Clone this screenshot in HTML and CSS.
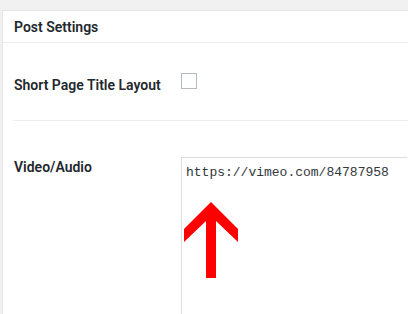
FILE: index.html
```html
<!DOCTYPE html>
<html lang="en">
<head>
  <meta charset="UTF-8" />
  <title>Post Settings</title>
  <link rel="stylesheet" href="styles.css">
</head>
<body>

  <div class="postbox">
    <h2 class="postbox-title">Post Settings</h2>

    <div class="setting-row setting-row-line">
      <label class="setting-label" for="shortTitle">Short Page Title Layout</label>
      <input type="checkbox" id="shortTitle" class="setting-check">
    </div>

    <div class="setting-row">
      <label class="setting-label" for="videoAudio">Video/Audio</label>
      <div class="field-wrap">
        <textarea id="videoAudio" class="setting-text">https://vimeo.com/84787958</textarea>
        <svg class="arrow" width="55" height="78" viewBox="0 0 55 78">
          <polygon points="27,0 54,27 54,40 32,19 32,76 22,76 22,19 0,40 0,27" fill="#ff0000" />
        </svg>
      </div>
    </div>
  </div>

</body>
</html>
```

FILE: styles.css
```css
html {
  overflow: hidden;
}
body {
  margin: 0;
  padding: 10px 0 0 2px;
  background: #f1f1f1;
  font-family: Roboto, "Liberation Sans", Arial, sans-serif;
  color: #23282d;
  height: 314px;
  box-sizing: border-box;
  overflow: hidden;
}
.postbox {
  background: #fff;
  border: 1px solid #e5e5e5;
  border-right: none;
  height: 320px;
}
.postbox-title {
  margin: 0;
  padding: 2px 11px 0;
  font-size: 14px;
  font-weight: 600;
  line-height: 29px;
  border-bottom: 1px solid #eee;
}
.setting-row {
  display: flex;
  align-items: flex-start;
  margin-left: 10px;
}
.setting-row-line {
  padding: 32px 0 25px;
  border-bottom: 1px solid #eee;
}
.setting-label {
  width: 167px;
  padding-left: 1px;
  flex-shrink: 0;
  font-size: 14px;
  font-weight: 600;
  line-height: 20px;
}
.setting-check {
  margin: -2px 0 0 0;
  width: 16px;
  height: 16px;
  appearance: none;
  border: 1px solid #b4b9be;
  background: #fff;
  box-sizing: border-box;
}
.setting-row:last-child {
  padding-top: 36px;
}
.field-wrap {
  position: relative;
  margin-top: 0;
}
.setting-text {
  display: block;
  width: 226px;
  height: 160px;
  margin: 0;
  padding: 5px 4px;
  border: 1px solid #ddd;
  border-right: none;
  font-family: "Liberation Mono", "Courier New", monospace;
  font-size: 13px;
  line-height: 19px;
  color: #32373c;
  resize: none;
  box-sizing: border-box;
}
.arrow {
  position: absolute;
  left: 3px;
  top: 45px;
}
```
